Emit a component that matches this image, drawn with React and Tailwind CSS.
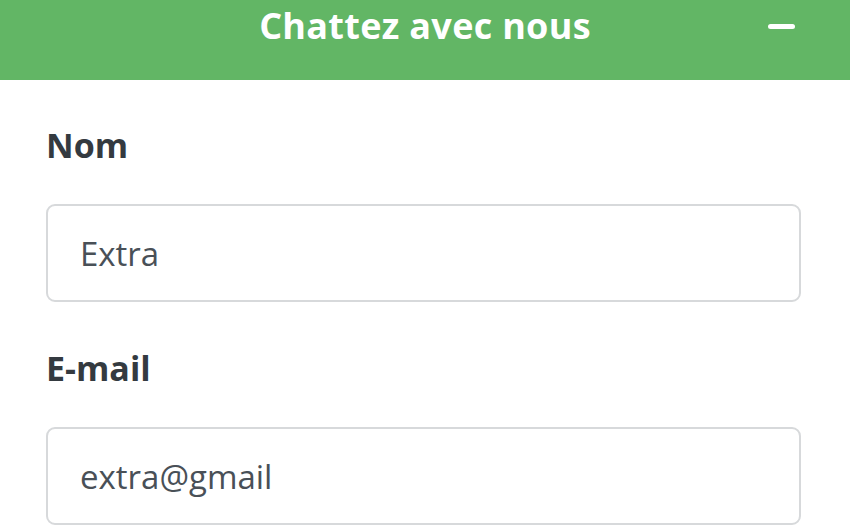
import React from 'react'

const fields = [
  { id: 'nom', label: 'Nom', value: 'Extra', type: 'text' },
  { id: 'email', label: 'E-mail', value: 'extra@gmail', type: 'email' },
]

export default function App() {
  return (
    <div className="w-[850px] h-[532px] overflow-hidden bg-white" style={{ fontFamily: '"Open Sans", "Noto Sans", sans-serif' }}>
      <div className="relative h-[80px] bg-[#62b665] flex justify-center">
        <h1 className="text-white font-bold text-[36px] leading-none pt-[8px] tracking-[0.3px]">Chattez avec nous</h1>
        <button className="absolute right-[55px] top-[24px] w-[27px] h-[5px] rounded-full bg-white" aria-label="Réduire" />
      </div>

      <form className="pl-[46px] pr-[49px] pt-[39px]">
        {fields.map(f => (
          <div key={f.id} className="mb-[40px]">
            <label htmlFor={f.id} className="block text-[34px] leading-[52px] font-bold text-[#343a40] mb-[33px]">
              {f.label}
            </label>
            <input
              id={f.id}
              type={f.type}
              value={f.value}
              readOnly
              className="block w-full h-[98px] border-2 border-[#d7d9db] rounded-[9px] pl-[32px] text-[33px] text-[#495057] outline-none"
            />
          </div>
        ))}
      </form>
    </div>
  )
}
